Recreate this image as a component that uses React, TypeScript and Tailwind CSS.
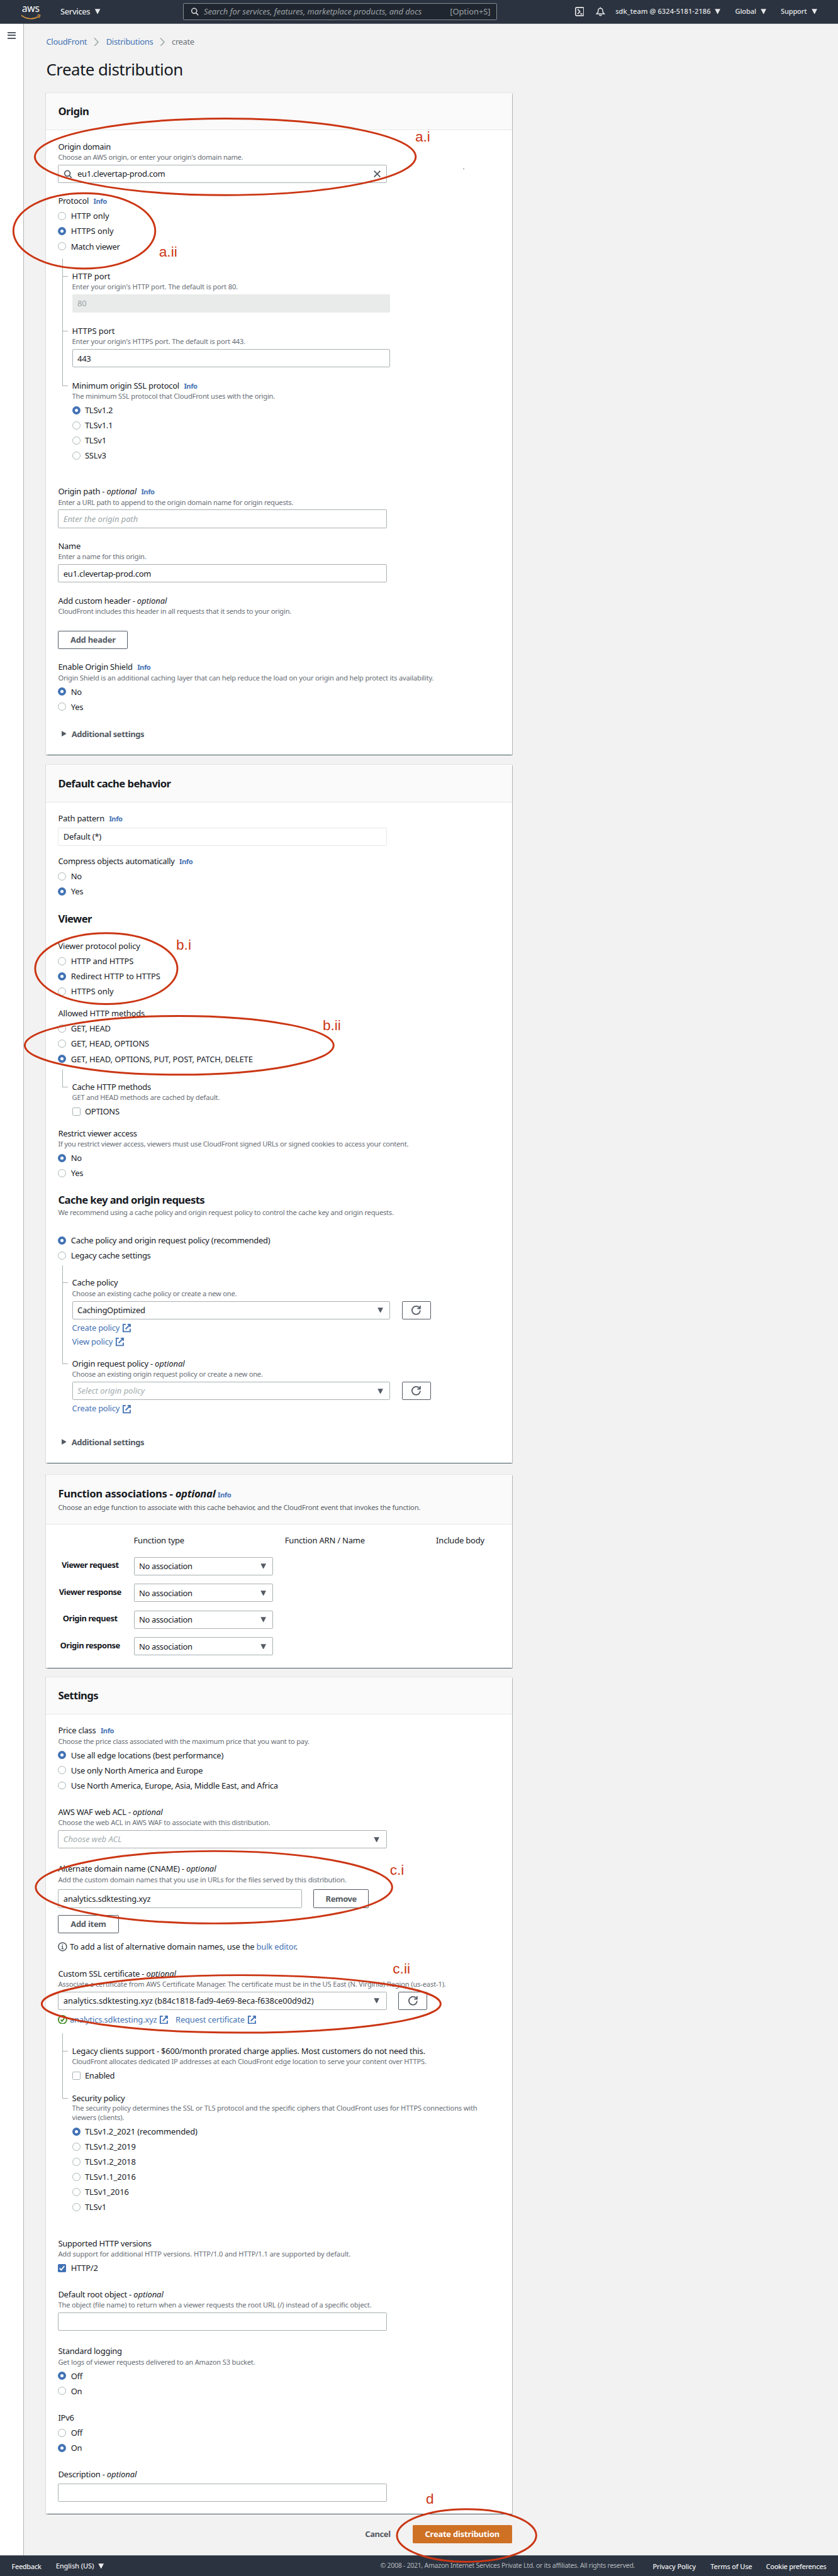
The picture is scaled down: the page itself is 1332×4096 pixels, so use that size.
import type { ReactNode } from "react";

const BASE = "tracking-[-0.017em]";

/* ---------- icons ---------- */

function Caret({ className = "" }: { className?: string }) {
  return (
    <svg viewBox="0 0 10 9" className={`h-[9px] w-[10px] shrink-0 fill-current ${className}`}>
      <path d="M0.3 0.3h9.4L5.6 8.4q-.6.9-1.2 0z" />
    </svg>
  );
}

function SearchIcon({ className = "" }: { className?: string }) {
  return (
    <svg viewBox="0 0 16 16" className={`shrink-0 fill-none stroke-current stroke-2 ${className}`}>
      <circle cx="7" cy="6.6" r="5" />
      <path d="M10.6 10.4L15 15.2" />
    </svg>
  );
}

function RefreshIcon() {
  return (
    <svg viewBox="0 0 16 16" className="h-4 w-4 fill-none stroke-[#545b64] stroke-2">
      <path d="M10 5h5V0" />
      <path d="M15 8a6.96 6.96 0 0 1-7 7 6.96 6.96 0 0 1-7-7 6.96 6.96 0 0 1 7-7c2.9 0 5.4 1.7 6.4 4" />
    </svg>
  );
}

function ExternalIcon() {
  return (
    <svg viewBox="0 0 16 16" className="h-4 w-4 shrink-0 fill-none stroke-current stroke-2">
      <path d="M9.5 2h4.500v4.500M6 10.300L13.800 2.200M14 9.500V14.500H2V2h4.500" />
    </svg>
  );
}

function InfoStatusIcon() {
  return (
    <svg viewBox="0 0 16 16" className="h-4 w-4 shrink-0 fill-none stroke-[#545b64]">
      <circle cx="8" cy="8" r="7" strokeWidth="1.7" />
      <path d="M8 7v4.500M6.300 7.200H8M6 11.500h4" strokeWidth="1.5" />
      <circle cx="8" cy="4.7" r="0.6" strokeWidth="1" />
    </svg>
  );
}

function SuccessIcon() {
  return (
    <svg viewBox="0 0 16 16" className="h-4 w-4 shrink-0 fill-none stroke-[#3f8a22] stroke-2">
      <circle cx="8" cy="8" r="7" />
      <path d="M5 8l2.200 2.500L11 5.500" />
    </svg>
  );
}

/* ---------- form pieces ---------- */

function Label({ children, info, optional, tr = BASE }: { children: ReactNode; info?: boolean; optional?: boolean; tr?: string }) {
  return (
    <div className="flex h-[20px] items-baseline gap-2 whitespace-nowrap text-[14px] leading-[20px] text-[#16191f]">
      <span className={tr}>
        {children}
        {optional && (
          <>
            {" - "}
            <em className="tracking-[-0.003em]">optional</em>
          </>
        )}
      </span>
      {info && <InfoLink />}
    </div>
  );
}

function InfoLink() {
  return <a className="text-[12px] leading-[16px] font-bold tracking-[-0.034em] text-[#4472b4]">Info</a>;
}

function Desc({ children, tr = "tracking-[-0.015em]" }: { children: ReactNode; tr?: string }) {
  return <div className={`h-[18px] whitespace-nowrap text-[12px] leading-[18px] text-[#666c74] ${tr}`}>{children}</div>;
}

function Radio({ label, on, tr = BASE }: { label: string; on?: boolean; tr?: string }) {
  return (
    <label className="flex h-[26px] items-center">
      {on ? (
        <span className="flex size-[14px] items-center justify-center rounded-full bg-[#4272b4]">
          <span className="size-[5.5px] rounded-full bg-white" />
        </span>
      ) : (
        <span className="size-[14px] rounded-full border border-[#a9b3b4] bg-white" />
      )}
      <span className={`ml-2 whitespace-nowrap text-[14px] leading-[20px] ${tr}`}>{label}</span>
    </label>
  );
}

function Checkbox({ label, on }: { label: string; on?: boolean }) {
  return (
    <label className="mt-[1.5px] flex h-[26px] items-center">
      {on ? (
        <span className="flex size-[14px] items-center justify-center rounded-[2px] bg-[#4272b4]">
          <svg viewBox="0 0 14 14" className="size-[14px] fill-none stroke-white stroke-2">
            <path d="M3 7.200l2.800 3L11 3.500" />
          </svg>
        </span>
      ) : (
        <span className="size-[14px] rounded-[2px] border border-[#a9b3b4] bg-white" />
      )}
      <span className={`ml-2 text-[14px] leading-[20px] ${BASE}`}>{label}</span>
    </label>
  );
}

const BOX = "flex h-[31.5px] items-center rounded-[2px] border px-2 text-[14px] leading-[20px] whitespace-nowrap";

function Input({ value, placeholder, w = "w-[565px]", tr = BASE }: { value?: string; placeholder?: string; w?: string; tr?: string }) {
  return (
    <div className={`${BOX} border-[#a9b0b1] bg-white ${w} ${tr}`}>
      {value ?? <em className="tracking-[-0.002em] text-[#9aa5a6]">{placeholder}</em>}
    </div>
  );
}

function Select({ value, placeholder, w = "w-[565px]", tr = BASE }: { value?: string; placeholder?: string; w?: string; tr?: string }) {
  return (
    <div className={`${BOX} justify-between border-[#a9b0b1] bg-white ${w} ${tr}`}>
      {value ?? <em className="tracking-[0em] text-[#a2acae]">{placeholder}</em>}
      <Caret className="mr-[3px] text-[#545b64]" />
    </div>
  );
}

function Button({ children, w, tr = "tracking-[-0.018em]" }: { children: ReactNode; w: string; tr?: string }) {
  return (
    <button className={`flex h-[31.5px] items-center justify-center rounded-[2px] border border-[#545b64] bg-white text-[14px] leading-[20px] font-bold text-[#545b64] ${w} ${tr}`}>
      {children}
    </button>
  );
}

function ExtLink({ children, tr = BASE }: { children: ReactNode; tr?: string }) {
  return (
    <a className="flex items-center gap-1 whitespace-nowrap text-[#4472b4]">
      <span className={tr}>{children}</span>
      <ExternalIcon />
    </a>
  );
}

/* A nested setting, joined to its parent's option by a connector line. */
function Branch({ children, h, first, last }: { children: ReactNode; h: string; first?: boolean; last?: boolean }) {
  return (
    <div className={`flex ${h}`}>
      <div className="ml-[7px] flex w-[17px] flex-col">
        <div className={`w-[10px] shrink-0 border-b border-l border-[#a9b3b4] ${first ? "h-[31px]" : "h-[11px]"}`} />
        {!last && <div className="w-[10px] flex-1 border-l border-[#a9b3b4]" />}
      </div>
      <div className={first ? "pt-5" : ""}>{children}</div>
    </div>
  );
}

function Card({ title, header = "h-[65.5px]", h, children }: { title: ReactNode; header?: string; h: string; children: ReactNode }) {
  return (
    <section className={`w-[801px] bg-white shadow-[0_1px_1px_0_rgba(0,28,36,0.5),1px_1px_1px_0_rgba(0,28,36,0.25),-1px_1px_1px_0_rgba(0,28,36,0.25)] ${h}`}>
      <header className={`border-t border-b border-t-[#e4e7e7] border-b-[#e4e7e7] bg-[#fafafa] px-[20.5px] pt-[20px] ${header}`}>{title}</header>
      <div className="px-[20.5px] pt-[17.5px]">{children}</div>
    </section>
  );
}

function H2({ children, tr = "tracking-[-0.034em]" }: { children: ReactNode; tr?: string }) {
  return <h2 className={`whitespace-nowrap text-[18px] leading-[24px] font-bold ${tr}`}>{children}</h2>;
}

function AdditionalSettings() {
  return (
    <div className="flex h-[20px] items-center pl-[6px] text-[14px] leading-[20px] font-bold tracking-[-0.028em] text-[#545b64]">
      <svg viewBox="0 0 8 10" className="mr-[9px] h-[10px] w-[8px] fill-current">
        <path d="M0 0.200v9.600L7.500 5.600q.7-.6 0-1.200z" />
      </svg>
      Additional settings
    </div>
  );
}

/* ---------- page chrome ---------- */

function TopNav() {
  return (
    <header className="flex h-[41px] items-center border-b border-[#5a6068] bg-[#2b3340] text-[14px] text-[#e6e7e8]">
      <div className="ml-[36px] w-[36px]">
        <div className="h-[19px] pl-[1.5px] text-[17px] leading-[17px] tracking-[-0.01em] text-white">aws</div>
        <svg viewBox="0 0 36 9" className="-mt-[1px] h-[9px] w-[36px] fill-none stroke-[#e0993a]">
          <path d="M1 1.500Q15 12 31 3.500" strokeWidth="1.8" />
          <path d="M28.500 1.200Q33 0 33.200 1.200Q33.200 3 31.600 5.500" strokeWidth="1.5" />
        </svg>
      </div>
      <span className="ml-[32px] w-[51px] font-medium tracking-[-0.031em]">Services</span>
      <Caret className="ml-[7px] h-[9px] w-[11px]" />
      <div className="ml-[141.5px] flex h-[30px] w-[540px] items-center rounded-[2px] border border-[#868c93] bg-[#20262f] pr-[10px] pl-[12px] text-[#9ba1a6]">
        <SearchIcon className="h-[14px] w-[14px] text-[#d5d7d9]" />
        <em className="ml-[9px] whitespace-nowrap tracking-[-0.004em]">Search for services, features, marketplace products, and docs</em>
        <span className="ml-auto tracking-[-0.005em]">[Option+S]</span>
      </div>
      <svg viewBox="0 0 16 16" className="ml-[134px] size-[16px] fill-none stroke-current stroke-[1.8]">
        <rect x="1" y="1" width="14" height="14" rx="1.5" />
        <path d="M4.500 4l4 4-4 4M9 12h4" />
      </svg>
      <svg viewBox="0 0 16 16" className="ml-[20px] size-[16px] fill-none stroke-current stroke-[1.6]">
        <path d="M1.500 11.800h13L12 9V6.500C12 4 10.500 2.500 8 2.500S4 4 4 6.500V9zM8 .5v2M6 13.500q2 2.800 4 0" />
      </svg>
      <div className="ml-[18px] flex items-center text-[12px] font-medium whitespace-nowrap">
        <span className="w-[171px] tracking-[0.007em]">sdk_team @ 6324-5181-2186</span>
        <Caret className="w-[9px]" />
        <span className="ml-[25px] w-[43.5px] tracking-[-0.01em]">Global</span>
        <Caret className="w-[9px]" />
        <span className="ml-[25px] w-[53px] tracking-[-0.016em]">Support</span>
        <Caret className="w-[9px]" />
      </div>
    </header>
  );
}

function Breadcrumb() {
  const sep = (
    <svg viewBox="0 0 9 15" className="h-[15px] w-[9px] fill-none stroke-[#aab4b5] stroke-2">
      <path d="M1 0.500l6.500 7L1 14.500" />
    </svg>
  );
  return (
    <nav className="flex h-[20px] items-center text-[14px] leading-[20px] text-[#4472b4]">
      <a className="w-[82px] tracking-[-0.021em]">CloudFront</a>
      {sep}
      <a className="ml-[12px] w-[92px] tracking-[-0.02em]">Distributions</a>
      {sep}
      <span className="ml-[12px] tracking-[-0.028em] text-[#6b7178]">create</span>
    </nav>
  );
}

function Footer() {
  return (
    <footer className="flex h-[36px] items-center border-t border-[#5a6068] bg-[#2b3340] text-[12px] whitespace-nowrap text-[#eceded]">
      <span className="ml-[20px] w-[76px] pt-[2px] font-medium tracking-[-0.035em]">Feedback</span>
      <span className="w-[72.5px] font-medium tracking-[-0.014em]">English (US)</span>
      <Caret className="w-[10px]" />
      <span className="ml-[475.5px] w-[468.5px] text-[11.5px] tracking-[-0.0287em] text-[#b5b9bd]">
        © 2008 - 2021, Amazon Internet Services Private Ltd. or its affiliates. All rights reserved.
      </span>
      <span className="w-[99.5px] pt-[2px] font-medium tracking-[-0.02em]">Privacy Policy</span>
      <span className="w-[95.5px] pt-[2px] font-medium tracking-[-0.02em]">Terms of Use</span>
      <span className="pt-[2px] font-medium tracking-[-0.031em]">Cookie preferences</span>
    </footer>
  );
}

/* ---------- cards ---------- */

function OriginCard() {
  return (
    <Card h="h-[1140px]" title={<H2 tr="tracking-[-0.030em]">Origin</H2>}>
      <div className="h-[94px]">
        <Label tr="tracking-[-0.026em]">Origin domain</Label>
        <Desc tr="tracking-[-0.022em]">Choose an AWS origin, or enter your origin's domain name.</Desc>
        <div className={`${BOX} mt-[3.5px] w-[565px] border-[#a9b0b1] bg-white`}>
          <SearchIcon className="h-[15px] w-[15px] text-[#545b64]" />
          <span className="ml-[9px] tracking-[-0.017em]">eu1.clevertap-prod.com</span>
          <svg viewBox="0 0 12 12" className="mr-[1px] ml-auto h-[12px] w-[12px] fill-none stroke-[#545b64] stroke-2">
            <path d="M0.700 0.700l10.600 10.600M11.300 0.700L0.700 11.300" />
          </svg>
        </div>
      </div>
      <div className="h-[109px]">
        <Label info>Protocol</Label>
        <div className="mt-[3px]">
          <Radio label="HTTP only" tr="tracking-[-0.003em]" />
          <Radio label="HTTPS only" tr="tracking-[-0.003em]" on />
          <Radio label="Match viewer" tr="tracking-[-0.020em]" />
        </div>
      </div>
      <Branch first h="h-[114.5px]">
        <Label tr="tracking-[-0.003em]">HTTP port</Label>
        <Desc tr="tracking-[-0.011em]">Enter your origin's HTTP port. The default is port 80.</Desc>
        <div className={`${BOX} mt-[3.5px] w-[547px] border-[#e9ebeb] bg-[#e9ebeb] text-[#9aa2a3]`}>80</div>
      </Branch>
      <Branch h="h-[94px]">
        <Label tr="tracking-[-0.003em]">HTTPS port</Label>
        <Desc tr="tracking-[-0.011em]">Enter your origin's HTTPS port. The default is port 443.</Desc>
        <div className="mt-[3.5px]">
          <Input value="443" w="w-[547px]" />
        </div>
      </Branch>
      <Branch last h="h-[182px]">
        <Label info tr="tracking-[-0.016em]">Minimum origin SSL protocol</Label>
        <Desc>The minimum SSL protocol that CloudFront uses with the origin.</Desc>
        <div className="mt-[1.8px]">
          <Radio label="TLSv1.2" on />
          <Radio label="TLSv1.1" />
          <Radio label="TLSv1" />
          <Radio label="SSLv3" />
        </div>
      </Branch>
      <div className="h-[94px]">
        <Label optional info>Origin path</Label>
        <Desc tr="tracking-[-0.018em]">Enter a URL path to append to the origin domain name for origin requests.</Desc>
        <div className="mt-[3.5px]">
          <Input placeholder="Enter the origin path" />
        </div>
      </div>
      <div className="h-[94px]">
        <Label>Name</Label>
        <Desc tr="tracking-[-0.018em]">Enter a name for this origin.</Desc>
        <div className="mt-[3.5px]">
          <Input value="eu1.clevertap-prod.com" tr="tracking-[-0.017em]" />
        </div>
      </div>
      <div className="h-[114px]">
        <Label optional>Add custom header</Label>
        <Desc tr="tracking-[-0.0165em]">CloudFront includes this header in all requests that it sends to your origin.</Desc>
        <div className="mt-[23.5px]">
          <Button w="w-[120px]">Add header</Button>
        </div>
      </div>
      <div className="h-[115.5px]">
        <Label info>Enable Origin Shield</Label>
        <Desc tr="tracking-[-0.0142em]">
          Origin Shield is an additional caching layer that can help reduce the load on your origin and help protect its availability.
        </Desc>
        <div className="mt-[1.8px]">
          <Radio label="No" on />
          <Radio label="Yes" />
        </div>
      </div>
      <AdditionalSettings />
    </Card>
  );
}

function RefreshButton() {
  return (
    <Button w="w-[50px]">
      <RefreshIcon />
    </Button>
  );
}

function CacheCard() {
  return (
    <Card h="h-[1202px]" title={<H2>Default cache behavior</H2>}>
      <div className="h-[74px]">
        <Label info>Path pattern</Label>
        <div className={`${BOX} mt-[5.5px] w-[565px] border-[#e6e9e9] bg-white ${BASE}`}>Default (*)</div>
      </div>
      <div className="h-[93px]">
        <Label info tr="tracking-[-0.019em]">Compress objects automatically</Label>
        <div className="mt-[3px]">
          <Radio label="No" />
          <Radio label="Yes" on />
        </div>
      </div>
      <div className="h-[53px] pt-[4.5px]">
        <H2>Viewer</H2>
      </div>
      <div className="h-[116px]">
        <Label tr="tracking-[-0.0115em]">Viewer protocol policy</Label>
        <div className="mt-[3px]">
          <Radio label="HTTP and HTTPS" tr="tracking-[-0.008em]" />
          <Radio label="Redirect HTTP to HTTPS" tr="tracking-[-0.005em]" on />
          <Radio label="HTTPS only" tr="tracking-[-0.003em]" />
        </div>
      </div>
      <div className="h-[106px]">
        <Label tr="tracking-[-0.0115em]">Allowed HTTP methods</Label>
        <div className="mt-[3px]">
          <Radio label="GET, HEAD" tr="tracking-[-0.010em]" />
          <Radio label="GET, HEAD, OPTIONS" tr="tracking-[-0.012em]" />
          <Radio label="GET, HEAD, OPTIONS, PUT, POST, PATCH, DELETE" tr="tracking-[-0.008em]" on />
        </div>
      </div>
      <Branch first last h="h-[100px]">
        <Label tr="tracking-[-0.0185em]">Cache HTTP methods</Label>
        <Desc>GET and HEAD methods are cached by default.</Desc>
        <Checkbox label="OPTIONS" />
      </Branch>
      <div className="h-[107px]">
        <Label tr="tracking-[-0.0215em]">Restrict viewer access</Label>
        <Desc tr="tracking-[-0.0207em]">
          If you restrict viewer access, viewers must use CloudFront signed URLs or signed cookies to access your content.
        </Desc>
        <div className="mt-[1.5px]">
          <Radio label="No" on />
          <Radio label="Yes" />
        </div>
      </div>
      <div className="h-[74px] pt-[6px]">
        <H2>Cache key and origin requests</H2>
        <div className="mt-[1px]">
          <Desc tr="tracking-[-0.0185em]">We recommend using a cache policy and origin request policy to control the cache key and origin requests.</Desc>
        </div>
      </div>
      <div className="h-[56px]">
        <Radio label="Cache policy and origin request policy (recommended)" tr="tracking-[-0.0194em]" on />
        <Radio label="Legacy cache settings" tr="tracking-[-0.019em]" />
      </div>
      <Branch first h="h-[159px]">
        <Label>Cache policy</Label>
        <Desc tr="tracking-[-0.0193em]">Choose an existing cache policy or create a new one.</Desc>
        <div className="mt-[3.5px] flex gap-5">
          <Select value="CachingOptimized" w="w-[547px]" tr="tracking-[-0.019em]" />
          <RefreshButton />
        </div>
        <div className="mt-[3.5px] flex flex-col text-[14px] leading-[23.5px]">
          <ExtLink>Create policy</ExtLink>
          <ExtLink>View policy</ExtLink>
        </div>
      </Branch>
      <Branch last h="h-[135px]">
        <Label optional tr="tracking-[-0.019em]">Origin request policy</Label>
        <Desc tr="tracking-[-0.0193em]">Choose an existing origin request policy or create a new one.</Desc>
        <div className="mt-[3.5px] flex gap-5">
          <Select placeholder="Select origin policy" w="w-[547px]" />
          <RefreshButton />
        </div>
        <div className="mt-[3.5px] flex flex-col text-[14px] leading-[23.5px]">
          <ExtLink>Create policy</ExtLink>
        </div>
      </Branch>
      <AdditionalSettings />
    </Card>
  );
}

function FunctionsCard() {
  const rows = ["Viewer request", "Viewer response", "Origin request", "Origin response"];
  return (
    <Card
      h="h-[333px]"
      header="h-[86px]"
      title={
        <>
          <div className="flex items-baseline gap-1">
            <H2 tr="tracking-[-0.0175em]">
              Function associations - <em>optional</em>
            </H2>
            <InfoLink />
          </div>
          <div className="mt-[3px] whitespace-nowrap text-[12px] leading-[18px] tracking-[-0.0152em] text-[#545b64]">
            Choose an edge function to associate with this cache behavior, and the CloudFront event that invokes the function.
          </div>
        </>
      }
    >
      <div className="flex h-[39px] text-[14px] leading-[20px] tracking-[-0.0125em]">
        <span className="ml-[130px] w-[260px]">Function type</span>
        <span className="w-[260px]">Function ARN / Name</span>
        <span>Include body</span>
      </div>
      {rows.map((r) => (
        <div key={r} className="flex h-[46px]">
          <span className="mr-[20px] w-[110px] pt-[3.5px] text-center text-[14px] leading-[20px] font-bold whitespace-nowrap tracking-[-0.036em]">{r}</span>
          <Select value="No association" w="w-[240px]" tr="tracking-[-0.023em]" />
        </div>
      ))}
    </Card>
  );
}

function SettingsCard() {
  return (
    <Card h="h-[1440.5px]" title={<H2>Settings</H2>}>
      <div className="h-[140px]">
        <Label info>Price class</Label>
        <Desc tr="tracking-[-0.0185em]">Choose the price class associated with the maximum price that you want to pay.</Desc>
        <div className="mt-[1.5px]">
          <Radio label="Use all edge locations (best performance)" tr="tracking-[-0.0174em]" on />
          <Radio label="Use only North America and Europe" tr="tracking-[-0.018em]" />
          <Radio label="Use North America, Europe, Asia, Middle East, and Africa" tr="tracking-[-0.0182em]" />
        </div>
      </div>
      <div className="h-[98px]">
        <Label optional>AWS WAF web ACL</Label>
        <Desc>Choose the web ACL in AWS WAF to associate with this distribution.</Desc>
        <div className="mt-[3.5px]">
          <Select placeholder="Choose web ACL" />
        </div>
      </div>
      <div className="h-[180px]">
        <Label optional tr="tracking-[-0.018em]">Alternate domain name (CNAME)</Label>
        <Desc tr="tracking-[-0.0159em]">Add the custom domain names that you use in URLs for the files served by this distribution.</Desc>
        <div className="mt-[7.5px] flex gap-5">
          <Input value="analytics.sdktesting.xyz" w="w-[419px]" tr="tracking-[-0.012em]" />
          <Button w="w-[95.5px]" tr="tracking-[-0.030em]">Remove</Button>
        </div>
        <div className="mt-[12.5px]">
          <Button w="w-[104px]">Add item</Button>
        </div>
        <div className="mt-[13px] flex h-[20px] items-center gap-[4px] text-[14px] leading-[20px]">
          <InfoStatusIcon />
          <span className="tracking-[-0.0125em]">
            To add a list of alternative domain names, use the <a className="text-[#4472b4]">bulk editor</a>.
          </span>
        </div>
      </div>
      <div className="h-[113px]">
        <Label optional>Custom SSL certificate</Label>
        <Desc tr="tracking-[-0.0112em]">
          Associate a certificate from AWS Certificate Manager. The certificate must be in the US East (N. Virginia) Region (us-east-1).
        </Desc>
        <div className="mt-[3.5px] flex gap-5">
          <Select value="analytics.sdktesting.xyz (b84c1818-fad9-4e69-8eca-f638ce00d9d2)" tr="tracking-[-0.0012em]" />
          <RefreshButton />
        </div>
        <div className="mt-[6px] flex h-[20px] items-center text-[14px] leading-[20px]">
          <SuccessIcon />
          <div className="ml-[4px] flex gap-[12px]">
            <ExtLink tr="tracking-[-0.012em]">analytics.sdktesting.xyz</ExtLink>
            <ExtLink tr="tracking-[-0.012em]">Request certificate</ExtLink>
          </div>
        </div>
      </div>
      <Branch first h="h-[101px]">
        <Label tr="tracking-[-0.0156em]">Legacy clients support - $600/month prorated charge applies. Most customers do not need this.</Label>
        <Desc tr="tracking-[-0.0166em]">CloudFront allocates dedicated IP addresses at each CloudFront edge location to serve your content over HTTPS.</Desc>
        <Checkbox label="Enabled" />
      </Branch>
      <Branch last h="h-[250px]">
        <Label>Security policy</Label>
        <p className="h-[32px] w-[705px] text-[12px] leading-[16px] tracking-[-0.0131em] text-[#666c74]">
          The security policy determines the SSL or TLS protocol and the specific ciphers that CloudFront uses for HTTPS connections with
          <br />
          viewers (clients).
        </p>
        <div className="mt-[3px]">
          <Radio label="TLSv1.2_2021 (recommended)" tr="tracking-[-0.007em]" on />
          <Radio label="TLSv1.2_2019" tr="tracking-[-0.002em]" />
          <Radio label="TLSv1.2_2018" tr="tracking-[-0.002em]" />
          <Radio label="TLSv1.1_2016" tr="tracking-[-0.002em]" />
          <Radio label="TLSv1_2016" tr="tracking-[-0.002em]" />
          <Radio label="TLSv1" />
        </div>
      </Branch>
      <div className="h-[88px]">
        <Label>Supported HTTP versions</Label>
        <Desc tr="tracking-[-0.0101em]">Add support for additional HTTP versions. HTTP/1.0 and HTTP/1.1 are supported by default.</Desc>
        <Checkbox label="HTTP/2" on />
      </div>
      <div className="h-[98px]">
        <Label optional>Default root object</Label>
        <Desc tr="tracking-[-0.012em]">The object (file name) to return when a viewer requests the root URL (/) instead of a specific object.</Desc>
        <div className="mt-[3.5px]">
          <Input value="" />
        </div>
      </div>
      <div className="h-[114px]">
        <Label>Standard logging</Label>
        <Desc>Get logs of viewer requests delivered to an Amazon S3 bucket.</Desc>
        <div className="mt-[1.5px]">
          <Radio label="Off" on />
          <Radio label="On" />
        </div>
      </div>
      <div className="h-[98px]">
        <Label>IPv6</Label>
        <div className="mt-[3px]">
          <Radio label="Off" />
          <Radio label="On" on />
        </div>
      </div>
      <div>
        <Label optional>Description</Label>
        <div className="mt-[5.5px]">
          <Input value="" />
        </div>
      </div>
    </Card>
  );
}

/* ---------- red annotations drawn over the form ---------- */

const RINGS = [
  { cx: 387.5, cy: 269.8, rx: 327.5, ry: 65.8 },
  { cx: 145, cy: 397.2, rx: 122, ry: 64.8 },
  { cx: 182.8, cy: 1666.5, rx: 122.3, ry: 61 },
  { cx: 308.2, cy: 1798.5, rx: 265.5, ry: 50.5 },
  { cx: 368, cy: 3247, rx: 306.5, ry: 62.2 },
  { cx: 414.8, cy: 3447.7, rx: 343, ry: 49.5 },
  { cx: 802.5, cy: 4362.2, rx: 119.8, ry: 45.3 },
];

const NOTES = [
  { x: 714, y: 243.5, text: "a.i" },
  { x: 273.5, y: 441, text: "a.ii" },
  { x: 303, y: 1634, text: "b.i" },
  { x: 555, y: 1772, text: "b.ii" },
  { x: 670.5, y: 3225.5, text: "c.i" },
  { x: 675.5, y: 3395.5, text: "c.ii" },
  { x: 732.5, y: 4308, text: "d" },
];

function Annotations() {
  return (
    <svg viewBox="0 0 1441 4432" className="pointer-events-none absolute top-0 left-0 h-[4432px] w-[1441px]">
      {RINGS.map((r) => (
        <ellipse key={r.cy} {...r} className="fill-none stroke-[#cb3614] stroke-[3.2]" />
      ))}
      {NOTES.map((n) => (
        <text key={n.text} x={n.x} y={n.y} className="fill-[#cb3614] font-['Liberation_Sans',sans-serif] text-[24.5px]">
          {n.text}
        </text>
      ))}
      <circle cx="797.5" cy="290.5" r="0.7" className="fill-[#333]" />
    </svg>
  );
}

export default function App() {
  return (
    <div className="h-[4096px] w-[1332px] overflow-hidden bg-[#f2f2f2]">
      <div className="relative flex h-[4432px] w-[1442px] flex-col bg-[#f2f2f2] font-['Noto_Sans',sans-serif] text-[#16191f] [zoom:0.9242]">
        <TopNav />
        <div className="flex h-[4355px]">
          <aside className="w-[41px] shrink-0 border-r border-[#b4b9ba] bg-white">
            <div className="mt-[14px] ml-[13px] flex w-[14px] flex-col gap-[3px]">
              <span className="h-[2px] bg-[#545b64]" />
              <span className="h-[2px] bg-[#545b64]" />
              <span className="h-[2px] bg-[#545b64]" />
            </div>
          </aside>
          <main className="ml-[38.5px] flex w-[801px] flex-col">
            <div className="mt-[21px]">
              <Breadcrumb />
            </div>
            <h1 className="mt-[20px] h-[57px] text-[28px] leading-[36px] tracking-[-0.0205em]">Create distribution</h1>
            <div className="flex flex-col">
              <OriginCard />
              <div className="h-[16px]" />
              <CacheCard />
              <div className="h-[19.5px]" />
              <FunctionsCard />
              <div className="h-[15px]" />
              <SettingsCard />
            </div>
            <div className="mt-[19.5px] flex h-[31.5px] items-center justify-end gap-[38px] text-[14px] font-bold">
              <a className="tracking-[-0.030em] text-[#545b64]">Cancel</a>
              <button className="h-[31.5px] w-[171px] rounded-[2px] bg-[#cf7125] tracking-[-0.015em] text-white">Create distribution</button>
            </div>
          </main>
        </div>
        <Footer />
        <Annotations />
      </div>
    </div>
  );
}
